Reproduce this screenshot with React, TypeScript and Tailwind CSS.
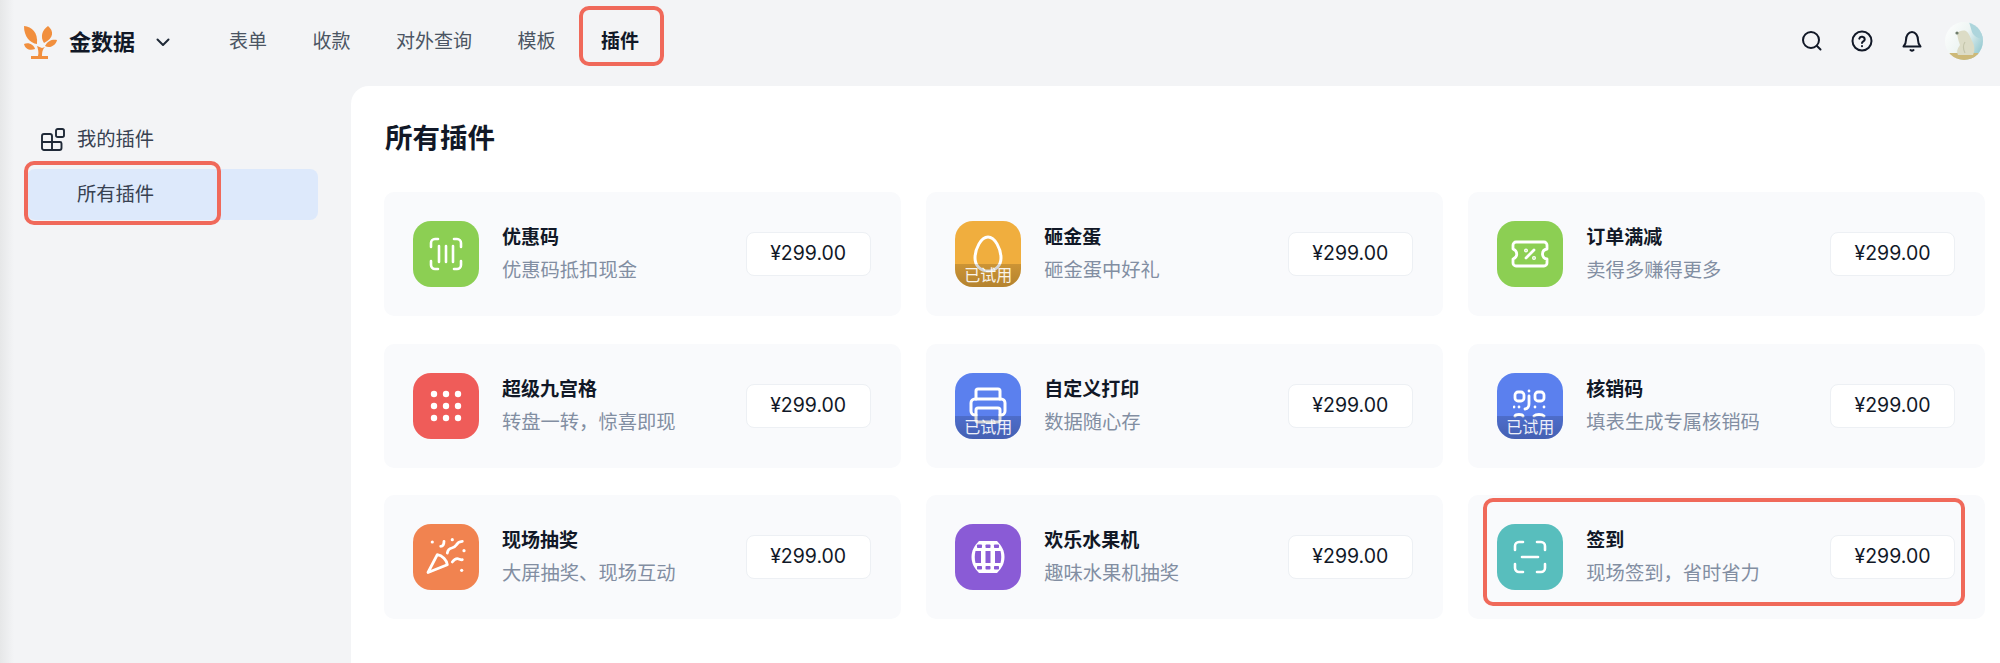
import React from "react";

const FONT = 'font-["Inter","Noto_Sans_CJK_SC",sans-serif]';

const W = { fill: "none", stroke: "#fff", strokeLinecap: "round" as const, strokeLinejoin: "round" as const };

function Coupon() {
  return (
    <svg width="34" height="34" viewBox="0 0 34 34" {...W} strokeWidth="2.6">
      <path d="M2 10V6a4 4 0 0 1 4-4h3M25 2h3a4 4 0 0 1 4 4v4M32 24v4a4 4 0 0 1-4 4h-3M9 32H6a4 4 0 0 1-4-4v-4" />
      <path d="M10 9v16M17 9v16M24 9v16" />
    </svg>
  );
}
function Egg() {
  return (
    <svg width="30" height="38" viewBox="0 0 30 38" {...W} strokeWidth="3">
      <path d="M15 2C8 2 2 14 2 23c0 8 6 13 13 13s13-5 13-13C28 14 22 2 15 2Z" />
    </svg>
  );
}
function Ticket() {
  return (
    <svg width="38" height="28" viewBox="0 0 38 28" {...W} strokeWidth="2.8">
      <path d="M5 2h28a3 3 0 0 1 3 3v4c-6 1-6 9 0 10v4a3 3 0 0 1-3 3H5a3 3 0 0 1-3-3v-4c5-2 5-8 0-10V5a3 3 0 0 1 3-3Z" />
      <path d="M15 18l8-8" />
      <circle cx="15" cy="10.5" r="0.6" fill="#fff" />
      <circle cx="23" cy="18" r="0.6" fill="#fff" />
    </svg>
  );
}
function Dots() {
  const c = [5, 17, 29];
  return (
    <svg width="34" height="34" viewBox="0 0 34 34" fill="#fff">
      {c.map((y) => c.map((x) => <circle key={`${x}-${y}`} cx={x} cy={y} r="3.2" />))}
    </svg>
  );
}
function Printer() {
  return (
    <svg width="38" height="38" viewBox="0 0 38 38" {...W} strokeWidth="3">
      <path d="M7 12V4a2 2 0 0 1 2-2h20a2 2 0 0 1 2 2v8" />
      <path d="M7 28H6a4 4 0 0 1-4-4v-8a4 4 0 0 1 4-4h26a4 4 0 0 1 4 4v8a4 4 0 0 1-4 4h-1" />
      <rect x="7" y="21" width="24" height="14" rx="2" />
    </svg>
  );
}
function Qr() {
  return (
    <svg width="34" height="34" viewBox="0 0 34 34" {...W} strokeWidth="2.8">
      <rect x="2" y="3" width="9" height="9" rx="3" />
      <rect x="22" y="3" width="9" height="9" rx="3" />
      <path d="M16 2v0M16 7v8c0 3-1 4.500-4 5M1 18h0M6 18h0M22 18h0M31 18h0M2 27c1-2 7-2 8 0M21 27c2-2 8-2 10 0" />
    </svg>
  );
}
function Popper() {
  return (
    <svg width="40" height="40" viewBox="0 0 40 40" fill="none">
      <g stroke="#fff" strokeWidth="2.8" strokeLinecap="round" strokeLinejoin="round" fill="none">
        <path d="M11.300 17.700 2 35.500l19.300-7.800c-.5-4.500-5-9.500-10-10Z" />
        <path d="M21.300 16c.5-3 2-4.500 4.500-5 2.500-.5 3.500-1.500 4.500-3 1-2 3-3.500 6-3.700" />
        <path d="M14.700 9.300c2 0 3.300-2 3.300-5" />
        <path d="M26.300 25c1.500-2 3-3.300 5-3.300 1.500 0 3.500 1.500 5 1" />
      </g>
      <g fill="#fff">
        <circle cx="6.300" cy="5" r="1.600" />
        <circle cx="26.300" cy="2.700" r="1.600" />
        <circle cx="38" cy="13.700" r="1.600" />
        <circle cx="35.700" cy="33.300" r="1.600" />
      </g>
    </svg>
  );
}
function Barrel() {
  return (
    <svg width="34" height="34" viewBox="0 0 34 34">
      <path d="M8 1h18c5 5 7.500 10 7.500 16S31 28 26 33H8C3 28 .5 23 .5 17S3 6 8 1Z" fill="#fff" />
      <g fill="#8a5bd6">
        <rect x="6" y="4.500" width="5" height="3.500" rx="0.800" />
        <rect x="14.500" y="4.500" width="5" height="3.500" rx="0.800" />
        <rect x="23" y="4.500" width="5" height="3.500" rx="0.800" />
        <path d="M4.500 11H10v12H4.500C3.500 19 3.500 15 4.500 11Z" />
        <rect x="14.500" y="11" width="5" height="12" />
        <path d="M24 11h5.500c1 4 1 8 0 12H24Z" />
        <rect x="6" y="26" width="5" height="3.500" rx="0.800" />
        <rect x="14.500" y="26" width="5" height="3.500" rx="0.800" />
        <rect x="23" y="26" width="5" height="3.500" rx="0.800" />
      </g>
    </svg>
  );
}
function Scan() {
  return (
    <svg width="34" height="34" viewBox="0 0 34 34" {...W} strokeWidth="2.6">
      <path d="M2 10V6a4 4 0 0 1 4-4h4M24 2h4a4 4 0 0 1 4 4v4M32 24v4a4 4 0 0 1-4 4h-4M10 32H6a4 4 0 0 1-4-4v-4" />
      <path d="M9 17h16" />
    </svg>
  );
}

const RedBox = ({ className }: { className: string }) => (
  <div className={`absolute rounded-[10px] border-4 border-[#f0695a] pointer-events-none ${className}`} />
);

type Item = { t: string; s: string; c: string; i: React.ReactNode; tried?: boolean; box?: boolean };

const items: Item[] = [
  { t: "优惠码", s: "优惠码抵扣现金", c: "bg-[#8ccf53]", i: <Coupon /> },
  { t: "砸金蛋", s: "砸金蛋中好礼", c: "bg-[#f0ae3e]", i: <Egg />, tried: true },
  { t: "订单满减", s: "卖得多赚得更多", c: "bg-[#8ccf53]", i: <Ticket /> },
  { t: "超级九宫格", s: "转盘一转，惊喜即现", c: "bg-[#ef5c59]", i: <Dots /> },
  { t: "自定义打印", s: "数据随心存", c: "bg-[#5b80ee]", i: <Printer />, tried: true },
  { t: "核销码", s: "填表生成专属核销码", c: "bg-[#5b80ee]", i: <Qr />, tried: true },
  { t: "现场抽奖", s: "大屏抽奖、现场互动", c: "bg-[#f18350]", i: <Popper /> },
  { t: "欢乐水果机", s: "趣味水果机抽奖", c: "bg-[#8a5bd6]", i: <Barrel /> },
  { t: "签到", s: "现场签到，省时省力", c: "bg-[#58bebd]", i: <Scan />, box: true },
];

function Card({ it }: { it: Item }) {
  return (
    <div className="relative flex h-[124px] items-center rounded-[10px] bg-[#f9fafc] pl-[29px] pr-[30px]">
      <div className={`relative flex h-[66px] w-[66px] shrink-0 items-center justify-center overflow-hidden rounded-[18px] ${it.c}`}>
        {it.i}
        {it.tried && (
          <div className="absolute inset-x-0 bottom-0 flex h-[23px] items-center justify-center bg-gradient-to-b from-black/15 to-black/25 text-[16px] leading-[23px] text-white/90">
            已试用
          </div>
        )}
      </div>
      <div className="ml-[23px] flex-1">
        <div className="text-[19px] font-semibold leading-[26px] text-[#111827]">{it.t}</div>
        <div className="mt-[6px] text-[19.3px] leading-[26px] text-[#828ea2]">{it.s}</div>
      </div>
      <div className="flex h-[44px] w-[125px] items-center justify-center rounded-[8px] border border-[#edf0f4] bg-white text-[19.5px] text-[#111827]">
        ¥299.00
      </div>
      {it.box && <RedBox className="left-[15px] top-[3px] h-[108px] w-[482px]" />}
    </div>
  );
}

const nav = ["表单", "收款", "对外查询", "模板"];

export default function App() {
  return (
    <div className={`relative flex h-[663px] w-[2000px] flex-col overflow-hidden bg-[#f3f4f6] ${FONT}`}>
      <div className="absolute inset-y-0 left-0 w-[14px] bg-gradient-to-r from-[#e6e7e8] to-[#f3f4f6]" />
      <header className="relative flex h-[86px] shrink-0 items-center pb-[2px] pl-[23px] pr-[17px]">
        <svg width="34" height="34" viewBox="0 0 34 34" fill="#f18f3e">
          <path d="M1 1c8 1 14 6 13 18C7 18 1 12 1 1Z" />
          <path d="M25 1c6 5 6 12-4 17-4-6-2-13 4-17Z" />
          <path d="M1 19c5-2 10 1 11 5-5 2-10 0-11-5Z" />
          <path d="M22 21c3-6 8-7 12-6-1 5-7 9-12 6Z" />
          <path d="M14 21l5 2 3-1c-2 2-3 4-3 9h6v3H8v-3h7c1-4 0-7-1-10Z" />
        </svg>
        <span className="ml-[12px] text-[22px] font-semibold leading-none text-[#111827]">金数据</span>
        <svg className="ml-[20px]" width="16" height="16" viewBox="0 0 16 16" fill="none" stroke="#1f2937" strokeWidth="2" strokeLinecap="round" strokeLinejoin="round">
          <path d="M2.5 5.5 8 11l5.5-5.5" />
        </svg>
        <nav className="ml-[58px] flex items-center gap-[45.5px] text-[19px] text-[#4b5563]">
          {nav.map((n) => (
            <span key={n}>{n}</span>
          ))}
          <span className="relative font-semibold text-[#111827]">
            插件
            <RedBox className="-left-[22px] -top-[22px] h-[60px] w-[85px]" />
          </span>
        </nav>
        <div className="-mt-[2px] ml-auto flex items-center">
          <svg width="22" height="22" viewBox="0 0 22 22" fill="none" stroke="#111827" strokeWidth="2" strokeLinecap="round">
            <circle cx="10" cy="10" r="8" />
            <path d="M16 16l3.5 3.5" />
          </svg>
          <svg className="ml-[28px]" width="22" height="22" viewBox="0 0 22 22" fill="none" stroke="#111827" strokeWidth="2" strokeLinecap="round" strokeLinejoin="round">
            <circle cx="11" cy="11" r="9.5" />
            <path d="M8.3 8.6a2.8 2.8 0 0 1 5.4.8c0 1.8-2.7 2-2.7 3.6" />
            <path d="M11 16v.2" />
          </svg>
          <svg className="ml-[28px]" width="22" height="22" viewBox="0 0 22 22" fill="none" stroke="#111827" strokeWidth="2" strokeLinecap="round" strokeLinejoin="round">
            <path d="M2.5 16.5c1.5-1.5 2.5-2.5 2.5-6.5 0-4.5 2.5-8 6-8s6 3.5 6 8c0 4 1 5 2.500 6.500Z" />
            <path d="M9.500 20c1 .8 2 .8 3 0" />
          </svg>
          <svg className="ml-[22px]" width="38" height="38" viewBox="0 0 38 38">
            <defs>
              <linearGradient id="sky" x1="0" y1="0" x2="1" y2="0.6">
                <stop offset="0" stopColor="#ffffff" />
                <stop offset="0.55" stopColor="#eef5f3" />
                <stop offset="1" stopColor="#9ccdd4" />
              </linearGradient>
              <clipPath id="av">
                <circle cx="19" cy="19" r="19" />
              </clipPath>
            </defs>
            <g clipPath="url(#av)">
              <rect width="38" height="38" fill="url(#sky)" />
              <path d="M24 0h14v18c-4-2-9-3-11-8Z" fill="#add5dc" />
              <path d="M0 31h38v7H0Z" fill="#cdb978" />
              <path d="M12 11c2-2 6-3 9-2 3 2 4 6 6 10 3 5 3 9 1 14H13c-2-4 0-7 2-10-1-3-2-5-3-12Z" fill="#dcdcc6" />
              <path d="M20 20c-2 3-2 7 0 11" stroke="#c4c5ab" strokeWidth="1.2" fill="none" />
              <circle cx="12" cy="11" r="1.600" fill="#6f7d6c" />
            </g>
          </svg>
        </div>
      </header>
      <div className="relative flex flex-1">
        <aside className="w-[351px] shrink-0 pl-[27px] pr-[33px] pt-[31px]">
          <div className="flex h-[44px] items-center pl-[14px] text-[19.3px] text-[#374151]">
            <svg width="24" height="23" viewBox="0 0 24 23" fill="none" stroke="#1f2937" strokeWidth="1.9" strokeLinejoin="round">
              <path d="M1 8a2 2 0 0 1 2-2h6a2 2 0 0 1 2 2v6h8a1.500 1.500 0 0 1 1.500 1.500V20a2 2 0 0 1-2 2H3a2 2 0 0 1-2-2Z" />
              <path d="M1 14h10v8" />
              <rect x="15" y="1" width="8" height="8" rx="1.800" />
            </svg>
            <span className="ml-[12px]">我的插件</span>
          </div>
          <div className="relative mt-[8px] flex h-[51px] items-center rounded-[8px] bg-[#dde9fb] pl-[50px] text-[19.3px] text-[#374151]">
            所有插件
            <RedBox className="-left-[3px] -top-[8px] h-[64px] w-[197px]" />
          </div>
        </aside>
        <main className="flex-1 rounded-tl-[18px] bg-white pl-[33px] pr-[15px] pt-[32px]">
          <h1 className="mb-[34px] ml-[1px] text-[27.500px] font-semibold leading-[40px] text-[#111827]">所有插件</h1>
          <div className="grid grid-cols-3 gap-x-[25.500px] gap-y-[27.500px]">
            {items.map((it) => (
              <Card key={it.t} it={it} />
            ))}
          </div>
        </main>
      </div>
    </div>
  );
}
